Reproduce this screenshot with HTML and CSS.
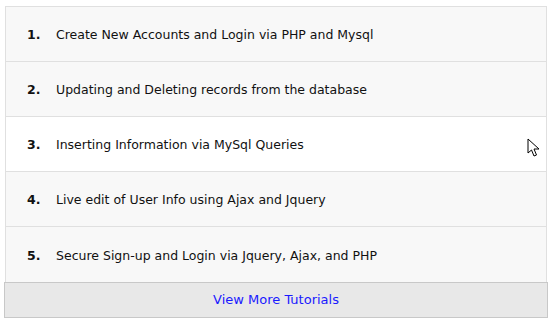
FILE: index.html
```html
<!DOCTYPE html>
<html lang="en">
<head>
    <meta charset="UTF-8">
    <title>Tutorials</title>
    <link rel="stylesheet" href="styles.css">
</head>
<body>
    <div class="tutorials">
        <ul class="tutorial-list">
            <li class="tutorial-item"><span class="num">1.</span><span class="title">Create New Accounts and Login via PHP and Mysql</span></li>
            <li class="tutorial-item"><span class="num">2.</span><span class="title">Updating and Deleting records from the database</span></li>
            <li class="tutorial-item hover"><span class="num">3.</span><span class="title">Inserting Information via MySql Queries</span>
                <svg class="cursor" width="14" height="20" viewBox="0 0 14 20"><path d="M1 1 L1 15 L4.5 12 L7 18 L9.5 17 L7 11 L12 11 Z" fill="#fff" stroke="#000" stroke-width="1" stroke-linejoin="round"/></svg>
            </li>
            <li class="tutorial-item"><span class="num">4.</span><span class="title">Live edit of User Info using Ajax and Jquery</span></li>
            <li class="tutorial-item"><span class="num">5.</span><span class="title">Secure Sign-up and Login via Jquery, Ajax, and PHP</span></li>
        </ul>
        <a class="more-button" href="#">View More Tutorials</a>
    </div>
</body>
</html>
```

FILE: styles.css
```css
* {
    box-sizing: border-box;
}
body {
    margin: 0;
    font-family: "DejaVu Sans", Verdana, sans-serif;
    font-size: 12.5px;
    background: #fff;
}
.tutorials {
    width: 544px;
    margin: 6px 0 0 4px;
}
.tutorial-list {
    list-style: none;
    margin: 0 1px;
    padding: 0;
    border: 1px solid #e0e0e0;
    border-bottom: none;
}
.tutorial-item {
    position: relative;
    display: flex;
    align-items: center;
    height: 55px;
    padding: 1px 0 0 21px;
    background: #f8f8f8;
    border-bottom: 1px solid #e0e0e0;
    color: #111;
}
.tutorial-item:last-child {
    border-bottom: none;
}
.tutorial-item.hover {
    background: #fff;
}
.num {
    width: 29px;
    font-weight: bold;
}
.cursor {
    position: absolute;
    left: 521px;
    top: 21px;
}
.more-button {
    display: block;
    height: 36px;
    line-height: 34px;
    text-align: center;
    font-size: 13px;
    background: #e8e8e8;
    border: 1px solid #c8c8c8;
    color: #1a1aff;
    text-decoration: none;
}
```
